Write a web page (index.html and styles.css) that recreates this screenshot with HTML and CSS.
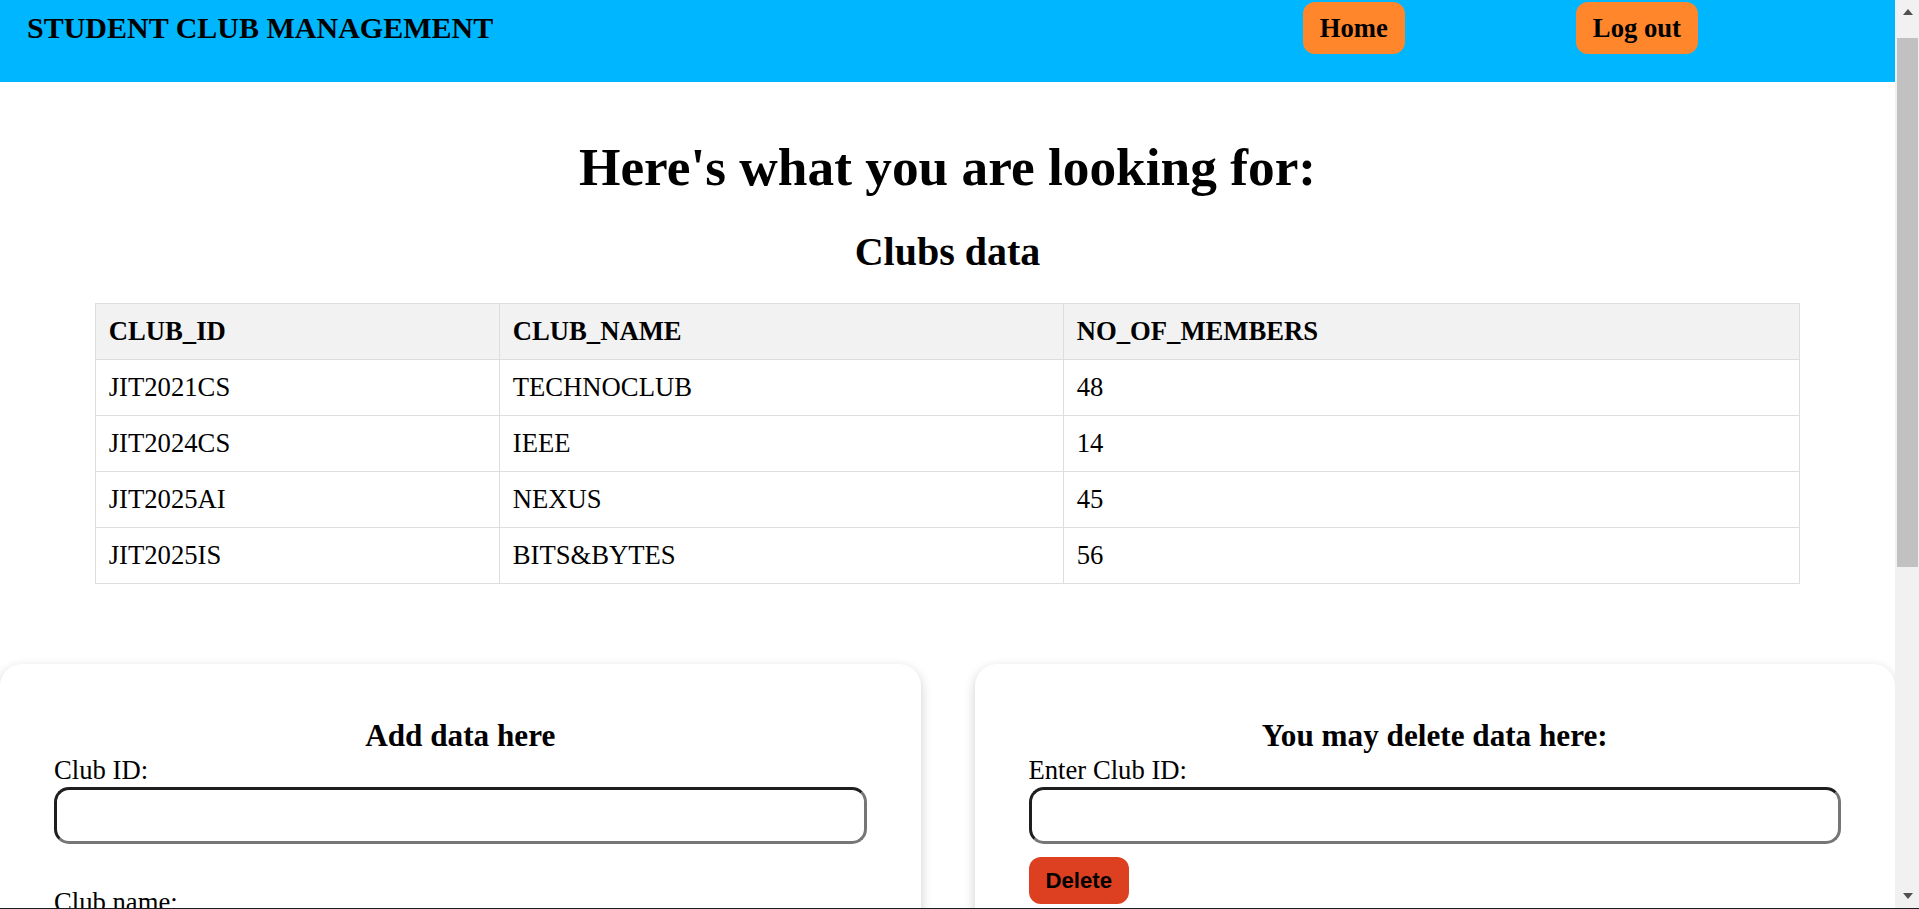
FILE: index.html
```html
<!DOCTYPE html>
<html lang="en">
<head>
<meta charset="utf-8">
<title>Student Club Management</title>
<link rel="stylesheet" href="styles.css">
</head>
<body>
<div class="window">
  <div class="viewport">
    <header class="topbar">
      <div class="brand">STUDENT CLUB MANAGEMENT</div>
      <nav class="nav">
        <a class="nav-btn" href="#">Home</a>
        <a class="nav-btn" href="#">Log out</a>
      </nav>
    </header>
    <main class="content">
      <h1 class="page-title">Here's what you are looking for:</h1>
      <h2 class="section-title">Clubs data</h2>
      <table class="clubs">
        <colgroup>
          <col class="col-id">
          <col class="col-name">
          <col class="col-members">
        </colgroup>
        <thead>
          <tr><th>CLUB_ID</th><th>CLUB_NAME</th><th>NO_OF_MEMBERS</th></tr>
        </thead>
        <tbody>
          <tr><td>JIT2021CS</td><td>TECHNOCLUB</td><td>48</td></tr>
          <tr><td>JIT2024CS</td><td>IEEE</td><td>14</td></tr>
          <tr><td>JIT2025AI</td><td>NEXUS</td><td>45</td></tr>
          <tr><td>JIT2025IS</td><td>BITS&amp;BYTES</td><td>56</td></tr>
        </tbody>
      </table>
      <section class="forms">
        <form class="card">
          <h3 class="card-title">Add data here</h3>
          <label class="field-label" for="cid">Club ID:</label>
          <input class="field-input" id="cid" type="text">
          <label class="field-label spaced" for="cname">Club name:</label>
          <input class="field-input" id="cname" type="text">
          <label class="field-label spaced" for="cnum">No. of members:</label>
          <input class="field-input" id="cnum" type="text">
        </form>
        <form class="card">
          <h3 class="card-title">You may delete data here:</h3>
          <label class="field-label" for="did">Enter Club ID:</label>
          <input class="field-input" id="did" type="text">
          <button class="delete-btn" type="button">Delete</button>
        </form>
      </section>
    </main>
  </div>
  <div class="scrollbar">
    <div class="sb-btn"><span class="arrow-up"></span></div>
    <div class="sb-track"><div class="sb-thumb"></div></div>
    <div class="sb-btn"><span class="arrow-down"></span></div>
  </div>
</div>
</body>
</html>
```
FILE: styles.css
```css
html, body {
  margin: 0;
  padding: 0;
  background: #ffffff;
}

body {
  font-family: "Liberation Serif", "Times New Roman", serif;
  font-size: 26.67px;
  color: #000;
}

.window {
  display: flex;
  height: 908px;
  border-bottom: 1px solid #1c1c1c;
  overflow: hidden;
}

.viewport {
  flex: 1;
  min-width: 0;
  overflow: hidden;
}

/* Header */
.topbar {
  display: flex;
  align-items: flex-start;
  height: 82px;
  background: #00b7ff;
}

.brand {
  margin: 10.6px 0 0 27px;
  font-size: 30px;
  font-weight: bold;
  line-height: 34px;
}

.nav {
  display: flex;
  gap: 171px;
  margin: 2px 197px 0 auto;
}

.nav-btn {
  display: block;
  height: 52px;
  line-height: 53.5px;
  padding: 0 17px;
  background: #ff862b;
  border-radius: 12px;
  color: #000;
  font-weight: bold;
  font-size: 26.67px;
  text-decoration: none;
}

/* Headings */
.page-title {
  margin: 54px 0 0;
  font-size: 53.33px;
  line-height: 62px;
  text-align: center;
}

.section-title {
  margin: 31px 0 28px;
  font-size: 40px;
  line-height: 46px;
  text-align: center;
}

/* Table */
.clubs {
  width: 90%;
  margin: 0 auto;
  border-collapse: collapse;
  table-layout: fixed;
}

.col-id { width: 404px; }
.col-name { width: 564px; }

.clubs th,
.clubs td {
  border: 1px solid #dddddd;
  padding: 12px 13px;
  line-height: 31px;
  text-align: left;
  font-size: 26.67px;
}

.clubs th {
  background: #f2f2f2;
  font-weight: bold;
}

/* Forms */
.forms {
  display: grid;
  grid-template-columns: 1fr 1fr;
  column-gap: 54px;
  margin-top: 80px;
}

.card {
  margin: 0;
  background: #fff;
  border-radius: 22px;
  box-shadow: 0 4px 12px rgba(0, 0, 0, 0.2);
  padding: 54px;
}

.card-title {
  margin: 0;
  font-size: 31.2px;
  line-height: 36px;
  text-align: center;
}

.field-label {
  display: block;
  line-height: 32px;
}

.field-label.spaced {
  margin-top: 42px;
}

.field-input {
  display: block;
  box-sizing: border-box;
  width: 100%;
  height: 57px;
  margin: 0.5px 0 0;
  border: 3px solid;
  border-color: #1e1e1e #767676 #767676 #1e1e1e;
  border-radius: 15px;
  background: #fff;
  font-family: "Liberation Serif", serif;
  font-size: 26.67px;
}

.delete-btn {
  display: block;
  margin-top: 13px;
  height: 47px;
  padding: 0 17px;
  border: none;
  border-radius: 12px;
  background: #dc4021;
  color: #000;
  font-family: "Liberation Sans", Arial, sans-serif;
  font-weight: bold;
  font-size: 22.2px;
  line-height: 47px;
}

/* Scrollbar */
.scrollbar {
  width: 24px;
  flex: none;
  display: flex;
  flex-direction: column;
  background: #f1f1f1;
}

.sb-btn {
  height: 24px;
  display: flex;
  align-items: center;
  justify-content: center;
}

.arrow-up {
  width: 0;
  height: 0;
  border-left: 5.5px solid transparent;
  border-right: 5.5px solid transparent;
  border-bottom: 6px solid #505050;
  margin-left: 1px;
}

.arrow-down {
  width: 0;
  height: 0;
  border-left: 5.5px solid transparent;
  border-right: 5.5px solid transparent;
  border-top: 6px solid #505050;
  margin-left: 1px;
}

.sb-track {
  flex: 1;
}

.sb-thumb {
  margin: 14px 1px 0 2px;
  height: 529px;
  background: #c1c1c1;
}
```
